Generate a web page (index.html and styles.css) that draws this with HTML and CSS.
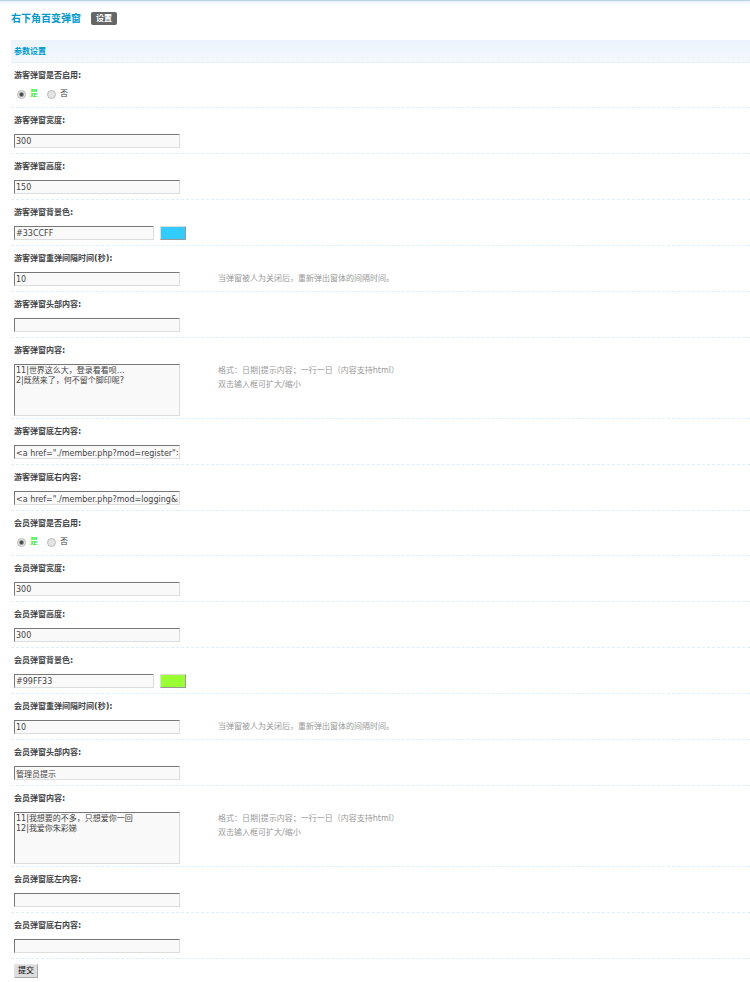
FILE: index.html
```
<!DOCTYPE html>
<html lang="zh-CN">
<head>
    <meta charset="UTF-8">
    <meta name="viewport" content="width=device-width, initial-scale=1.0">
    <title>右下角百变弹窗</title>
    <link rel="stylesheet" href="styles.css">
</head>
<body>
    <div class="header">
        <h1 class="title">右下角百变弹窗</h1>
        <a href="#" class="tab">设置</a>
    </div>

    <form class="settings" action="#" method="post">
        <h2 class="section-title">参数设置</h2>

        <!-- 游客弹窗 -->
        <div class="row row-radio" role="radiogroup" aria-labelledby="guestOpen">
            <span class="label" id="guestOpen">游客弹窗是否启用:</span>
            <div class="field radios">
                <label class="radio checked"><input type="radio" name="guest_open" value="1" checked>是</label>
                <label class="radio"><input type="radio" name="guest_open" value="0">否</label>
            </div>
        </div>
        <div class="row">
            <label class="label" for="guestWidth">游客弹窗宽度:</label>
            <div class="field"><input type="text" class="txt" id="guestWidth" value="300"></div>
        </div>
        <div class="row">
            <label class="label" for="guestHeight">游客弹窗高度:</label>
            <div class="field"><input type="text" class="txt" id="guestHeight" value="150"></div>
        </div>
        <div class="row">
            <label class="label" for="guestColor">游客弹窗背景色:</label>
            <div class="field">
                <input type="text" class="txt txt-color" id="guestColor" value="#33CCFF">
                <button type="button" class="swatch swatch-blue" aria-label="选择颜色"></button>
            </div>
        </div>
        <div class="row">
            <label class="label" for="guestTime">游客弹窗重弹间隔时间(秒):</label>
            <div class="field"><input type="text" class="txt" id="guestTime" value="10"></div>
            <div class="tips">当弹窗被人为关闭后，重新弹出窗体的间隔时间。</div>
        </div>
        <div class="row">
            <label class="label" for="guestHead">游客弹窗头部内容:</label>
            <div class="field"><input type="text" class="txt" id="guestHead" value=""></div>
        </div>
        <div class="row row-area">
            <label class="label" for="guestContent">游客弹窗内容:</label>
            <div class="field"><textarea class="area" id="guestContent">11|世界这么大，登录看看呗...
2|既然来了，何不留个脚印呢?</textarea></div>
            <div class="tips">格式：日期|提示内容；一行一日（内容支持html）<br>双击输入框可扩大/缩小</div>
        </div>
        <div class="row">
            <label class="label" for="guestLeft">游客弹窗底左内容:</label>
            <div class="field"><input type="text" class="txt" id="guestLeft" value="&lt;a href=&quot;./member.php?mod=register&quot;&gt;注册&lt;/a&gt;"></div>
        </div>
        <div class="row">
            <label class="label" for="guestRight">游客弹窗底右内容:</label>
            <div class="field"><input type="text" class="txt" id="guestRight" value="&lt;a href=&quot;./member.php?mod=logging&amp;amp;action=login&quot;&gt;登录&lt;/a&gt;"></div>
        </div>

        <!-- 会员弹窗 -->
        <div class="row row-radio" role="radiogroup" aria-labelledby="memberOpen">
            <span class="label" id="memberOpen">会员弹窗是否启用:</span>
            <div class="field radios">
                <label class="radio checked"><input type="radio" name="member_open" value="1" checked>是</label>
                <label class="radio"><input type="radio" name="member_open" value="0">否</label>
            </div>
        </div>
        <div class="row">
            <label class="label" for="memberWidth">会员弹窗宽度:</label>
            <div class="field"><input type="text" class="txt" id="memberWidth" value="300"></div>
        </div>
        <div class="row">
            <label class="label" for="memberHeight">会员弹窗高度:</label>
            <div class="field"><input type="text" class="txt" id="memberHeight" value="300"></div>
        </div>
        <div class="row">
            <label class="label" for="memberColor">会员弹窗背景色:</label>
            <div class="field">
                <input type="text" class="txt txt-color" id="memberColor" value="#99FF33">
                <button type="button" class="swatch swatch-green" aria-label="选择颜色"></button>
            </div>
        </div>
        <div class="row">
            <label class="label" for="memberTime">会员弹窗重弹间隔时间(秒):</label>
            <div class="field"><input type="text" class="txt" id="memberTime" value="10"></div>
            <div class="tips">当弹窗被人为关闭后，重新弹出窗体的间隔时间。</div>
        </div>
        <div class="row">
            <label class="label" for="memberHead">会员弹窗头部内容:</label>
            <div class="field"><input type="text" class="txt" id="memberHead" value="管理员提示"></div>
        </div>
        <div class="row row-area">
            <label class="label" for="memberContent">会员弹窗内容:</label>
            <div class="field"><textarea class="area" id="memberContent">11|我想要的不多，只想爱你一回
12|我爱你朱彩娣</textarea></div>
            <div class="tips">格式：日期|提示内容；一行一日（内容支持html）<br>双击输入框可扩大/缩小</div>
        </div>
        <div class="row">
            <label class="label" for="memberLeft">会员弹窗底左内容:</label>
            <div class="field"><input type="text" class="txt" id="memberLeft" value=""></div>
        </div>
        <div class="row">
            <label class="label" for="memberRight">会员弹窗底右内容:</label>
            <div class="field"><input type="text" class="txt" id="memberRight" value=""></div>
        </div>

        <button type="submit" class="btn">提交</button>
    </form>
</body>
</html>
```
FILE: styles.css
```
:root {
    --blue: #0099cc;
    --line: #deeffb;
    --text: #444;
    --tips: #999;
    --field: #f9f9f9;
}

* {
    box-sizing: border-box;
}

body {
    margin: 0;
    padding-left: 11px;
    font-family: "DejaVu Sans", "Noto Sans CJK SC", sans-serif;
    font-size: 8px;
    color: var(--text);
    border-top: 1px solid #bbd4e0;
    background: linear-gradient(#e6f1fa, #fff 6px) no-repeat #fff;
}

input, textarea, button {
    font-family: inherit;
    font-size: 8px;
    color: var(--text);
}

.header {
    display: flex;
    align-items: center;
    gap: 10px;
    height: 39px;
    padding-bottom: 4px;
}

.title {
    margin: 0;
    font-size: 10px;
    line-height: 12px;
    color: var(--blue);
}

.tab {
    padding: 0 5px;
    border-radius: 2px;
    background: #666;
    color: #fff;
    font-weight: bold;
    line-height: 13px;
    text-decoration: none;
}

.section-title {
    height: 23px;
    margin: 0;
    padding-left: 3px;
    border-bottom: 1px dashed var(--line);
    background: linear-gradient(#ebf4fd, #f3f8fd);
    font-size: 8px;
    line-height: 23px;
    color: var(--blue);
}

.row {
    display: grid;
    grid-template-columns: 204px 1fr;
    grid-template-rows: 26px 1fr;
    min-height: 46px;
    padding-left: 3px;
    border-bottom: 1px dashed var(--line);
}

.row-radio {
    min-height: 45px;
}

.row-area {
    min-height: 81px;
}

.label {
    grid-column: 1 / -1;
    font-weight: bold;
    line-height: 26px;
}

.field {
    display: flex;
    align-items: flex-start;
    gap: 6px;
}

.txt,
.area {
    width: 166px;
    border: 1px solid;
    border-color: #777 #ddd #ddd #777;
    border-radius: 0;
    background: var(--field);
}

.txt {
    height: 14px;
    padding: 0 1px;
}

.txt-color {
    width: 140px;
}

.area {
    height: 52px;
    padding: 1px;
    line-height: 10px;
    resize: none;
    overflow: hidden;
}

.swatch {
    width: 26px;
    height: 14px;
    padding: 0;
    border: 1px solid;
    border-color: #ddd #999 #999 #ddd;
}

.swatch-blue {
    background: #33ccff;
}

.swatch-green {
    background: #99ff33;
}

.radios {
    gap: 9px;
    padding-left: 3px;
}

.radio {
    display: flex;
    align-items: center;
    gap: 4px;
    line-height: 10px;
}

.radio input {
    appearance: none;
    width: 9px;
    height: 9px;
    margin: 0;
    border: 1px solid #bbb;
    border-radius: 50%;
    background: #e4e4e4;
}

.radio input:checked {
    background: radial-gradient(circle, #444 1px, #e4e4e4 3px);
}

.radio.checked {
    color: #00e600;
}

.tips {
    line-height: 14px;
    color: var(--tips);
}

.btn {
    display: block;
    height: 14px;
    margin: 5px 0 4px 3px;
    padding: 0 3px;
    border: 1px solid;
    border-color: #e6e6e6 #aaa #aaa #e6e6e6;
    background: #ddd;
    line-height: 12px;
    color: #000;
}
```
